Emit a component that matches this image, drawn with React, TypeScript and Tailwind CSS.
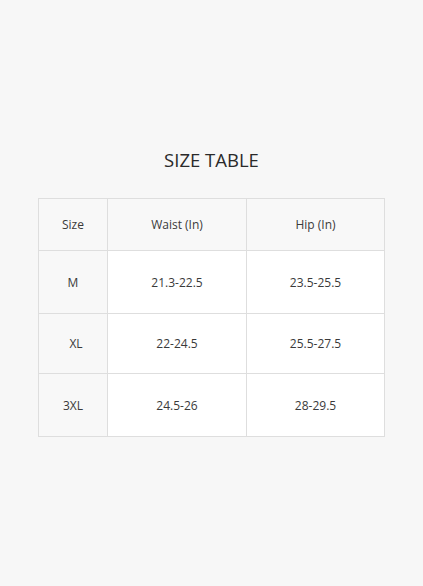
const rows = [
  { size: "M", waist: "21.3-22.5", hip: "23.5-25.5", h: "h-[63px]", pad: "" },
  { size: "XL", waist: "22-24.5", hip: "25.5-27.5", h: "h-[60px]", pad: "pl-[6px]" },
  { size: "3XL", waist: "24.5-26", hip: "28-29.5", h: "h-[63px]", pad: "" },
]

const App = () => {
  return (
    <div
      className="min-h-[586px] w-full bg-[#f7f7f7] text-[#3a3a3a] pt-[148px] px-[38px]"
      style={{ fontFamily: '"Open Sans", "Liberation Sans", sans-serif' }}
    >
      {/* Title */}
      <h1 className="text-center text-[18.5px] leading-[24px] font-normal text-[#2a2a2a]">
        SIZE TABLE
      </h1>

      {/* Table */}
      <table className="mt-[26px] w-[347px] border-collapse text-[12px] text-center">
        <thead>
          <tr className="h-[52px] bg-[#f8f8f8]">
            <th className="w-[69px] border border-[#dedede] font-normal">Size</th>
            <th className="w-[139px] border border-[#dedede] font-normal">Waist (In)</th>
            <th className="border border-[#dedede] font-normal">Hip (In)</th>
          </tr>
        </thead>
        <tbody>
          {rows.map((r) => (
            <tr key={r.size} className={r.h}>
              <td className={`border border-[#dedede] bg-[#f8f8f8] pt-px ${r.pad}`}>{r.size}</td>
              <td className="border border-[#dedede] bg-white pt-px">{r.waist}</td>
              <td className="border border-[#dedede] bg-white pt-px">{r.hip}</td>
            </tr>
          ))}
        </tbody>
      </table>
    </div>
  )
}

export default App
